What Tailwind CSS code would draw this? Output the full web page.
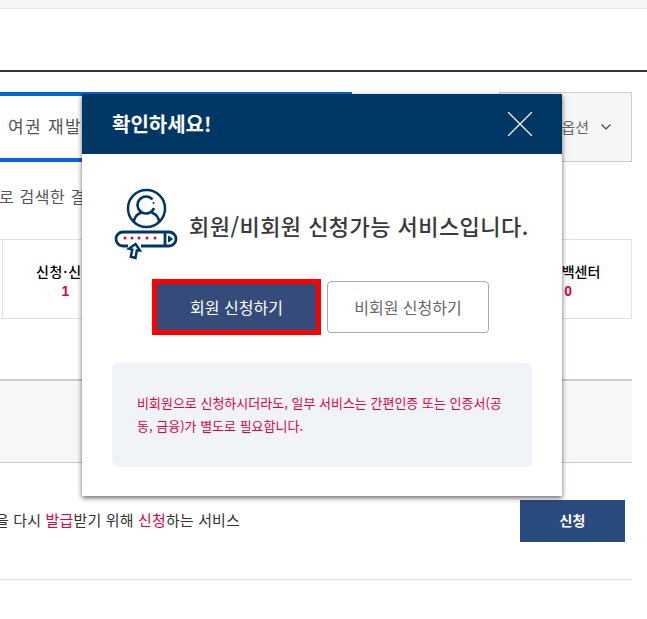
<!DOCTYPE html>
<html lang="ko">

<head>
  <meta charset="UTF-8" />
  <title>서비스 신청</title>
  <script src="https://cdn.jsdelivr.net/npm/@tailwindcss/browser@4"></script>
</head>

<body class="bg-white">
  <div class="relative w-[647px] h-[619px] overflow-hidden font-['Noto_Sans_CJK_KR','Noto_Sans',sans-serif] text-[#333]">
    <!-- page behind the popup -->
    <div class="h-[9px] bg-[#f6f5f5] border-b border-[#e6e6e6]"></div>
    <div class="h-[63px] border-b-2 border-[#333]"></div>

    <div class="mt-5 flex h-[70px] w-[632px] justify-between">
      <div class="flex w-[352px] items-center border-y-4 border-[#0068d8] pb-[2px] pl-2 text-[17px] tracking-[1.3px] text-[#555]">여권 재발급</div>
      <div class="flex w-[133px] items-center justify-end gap-3 border border-[#ccc] bg-[#f6f6f6] pr-5 text-[15px] text-[#666]">
        <span>옵션</span>
        <svg width="10" height="6" viewBox="0 0 10 6" fill="none" stroke="#444" stroke-width="1.2"><path d="M0.5 0.5 5 5l4.500-4.500" /></svg>
      </div>
    </div>

    <p class="mt-[22px] h-[24px] -ml-[1px] whitespace-nowrap text-[16px] leading-[24px] tracking-[0.6px] text-[#555]">로 검색한 결과</p>

    <div class="mt-[31px] grid h-[80px] w-[632px] grid-cols-[3px_repeat(5,1fr)] border-y border-r border-[#e2e2e2] text-center text-[14px] leading-[19px]">
      <div class="border-r border-[#e2e2e2]"></div>
      <div class="pt-[22px] font-medium tracking-[0.8px] text-black">신청·신고<b class="mt-px block font-['Liberation_Sans'] text-[#e6003c]">1</b></div>
      <div></div>
      <div></div>
      <div></div>
      <div class="pt-[22px] font-medium text-black">피드백센터<b class="mt-px block font-['Liberation_Sans'] text-[#e6003c]">0</b></div>
    </div>

    <div class="mt-[60px] h-[84px] w-[632px] border-t-2 border-b border-[#ccc] bg-[#f7f7f7]"></div>

    <div class="flex h-[117px] w-[632px] items-center justify-between border-b border-[#e2e2e2] pr-[7px] pb-[1px]">
      <div class="flex w-[240px] justify-end overflow-hidden whitespace-nowrap text-[15px] tracking-[0.15px]">
        <p>여권을 다시 <span class="text-[#e6003c]">발급</span>받기 위해 <span class="text-[#e6003c]">신청</span>하는 서비스</p>
      </div>
      <button class="h-[42px] w-[105px] bg-[#2a4b7e] text-[14px] font-bold text-white">신청</button>
    </div>

    <!-- popup -->
    <div class="absolute left-[82px] top-[94px] h-[402px] w-[480px] bg-white shadow-[0_2px_5px_rgba(0,0,0,0.6)]">
      <div class="flex h-[60px] items-center justify-between bg-[#003764] pl-[30px] pr-[30px]">
        <h2 class="text-[20px] font-bold text-white">확인하세요!</h2>
        <svg width="24" height="24" viewBox="0 0 24 24" fill="none" stroke="#fff" stroke-width="1.300"><path d="M0 0 24 24M24 0 0 24" /></svg>
      </div>

      <div class="flex items-start pl-8 pt-[34px]">
        <svg width="64" height="72" viewBox="0 0 64 72" fill="none" stroke="#003764" stroke-width="2.500">
          <circle cx="32.500" cy="20.500" r="18.500" />
          <path d="M38.500 11.500A8.500 8.500 0 1 0 40 20" />
          <path d="M20 34.500c0-5.500 3-8.500 7.500-10M45 34.500c0-5.500-3-8.500-7.500-10" />
          <circle cx="39.500" cy="15" r="1" fill="#003764" stroke="none" />
          <path d="M14 58H9a7 7 0 0 1 0-14h46a7 7 0 0 1 0 14H27" stroke-width="2.800" />
          <path d="M51 44v14" stroke-width="2.800" />
          <path d="M54.500 48l4 3-4 3z" fill="#003764" stroke-width="1" />
          <path d="M21.500 56l4.500 6.500-3.200 0-1.300 7.500-4.700-1.200 1.500-7.300-3.300-.8z" stroke-width="2.500" />
          <g fill="#e6003c" stroke="none">
            <circle cx="11" cy="50" r="1.500" />
            <circle cx="18" cy="50" r="1.500" />
            <circle cx="25" cy="50" r="1.500" />
            <circle cx="33" cy="50" r="1.500" />
            <circle cx="41" cy="50" r="1.500" />
          </g>
        </svg>
        <p class="ml-[11px] mt-[22px] whitespace-nowrap text-[22px] leading-[30px] font-medium tracking-[0.45px] text-[#3a3a3a]">회원/비회원 신청가능 서비스입니다.</p>
      </div>

      <div class="mt-[19px] flex items-center justify-center gap-[6px] pr-[3px]">
        <button class="h-[56px] w-[169px] border-[5px] border-[#f00] bg-[#354c7a] text-[16px] text-white">회원 신청하기</button>
        <button class="h-[52px] w-[162px] rounded border border-[#aaa] bg-white text-[16px] text-[#666]">비회원 신청하기</button>
      </div>

      <div class="mx-[30px] mt-[28px] h-[104px] rounded-md bg-[#f0f4f8] px-[25px] pt-[28px]">
        <p class="break-all text-[13px] leading-[23px] text-[#e6003c]">비회원으로 신청하시더라도, 일부 서비스는 간편인증 또는 인증서(공동, 금융)가 별도로 필요합니다.</p>
      </div>
    </div>
  </div>
</body>

</html>
